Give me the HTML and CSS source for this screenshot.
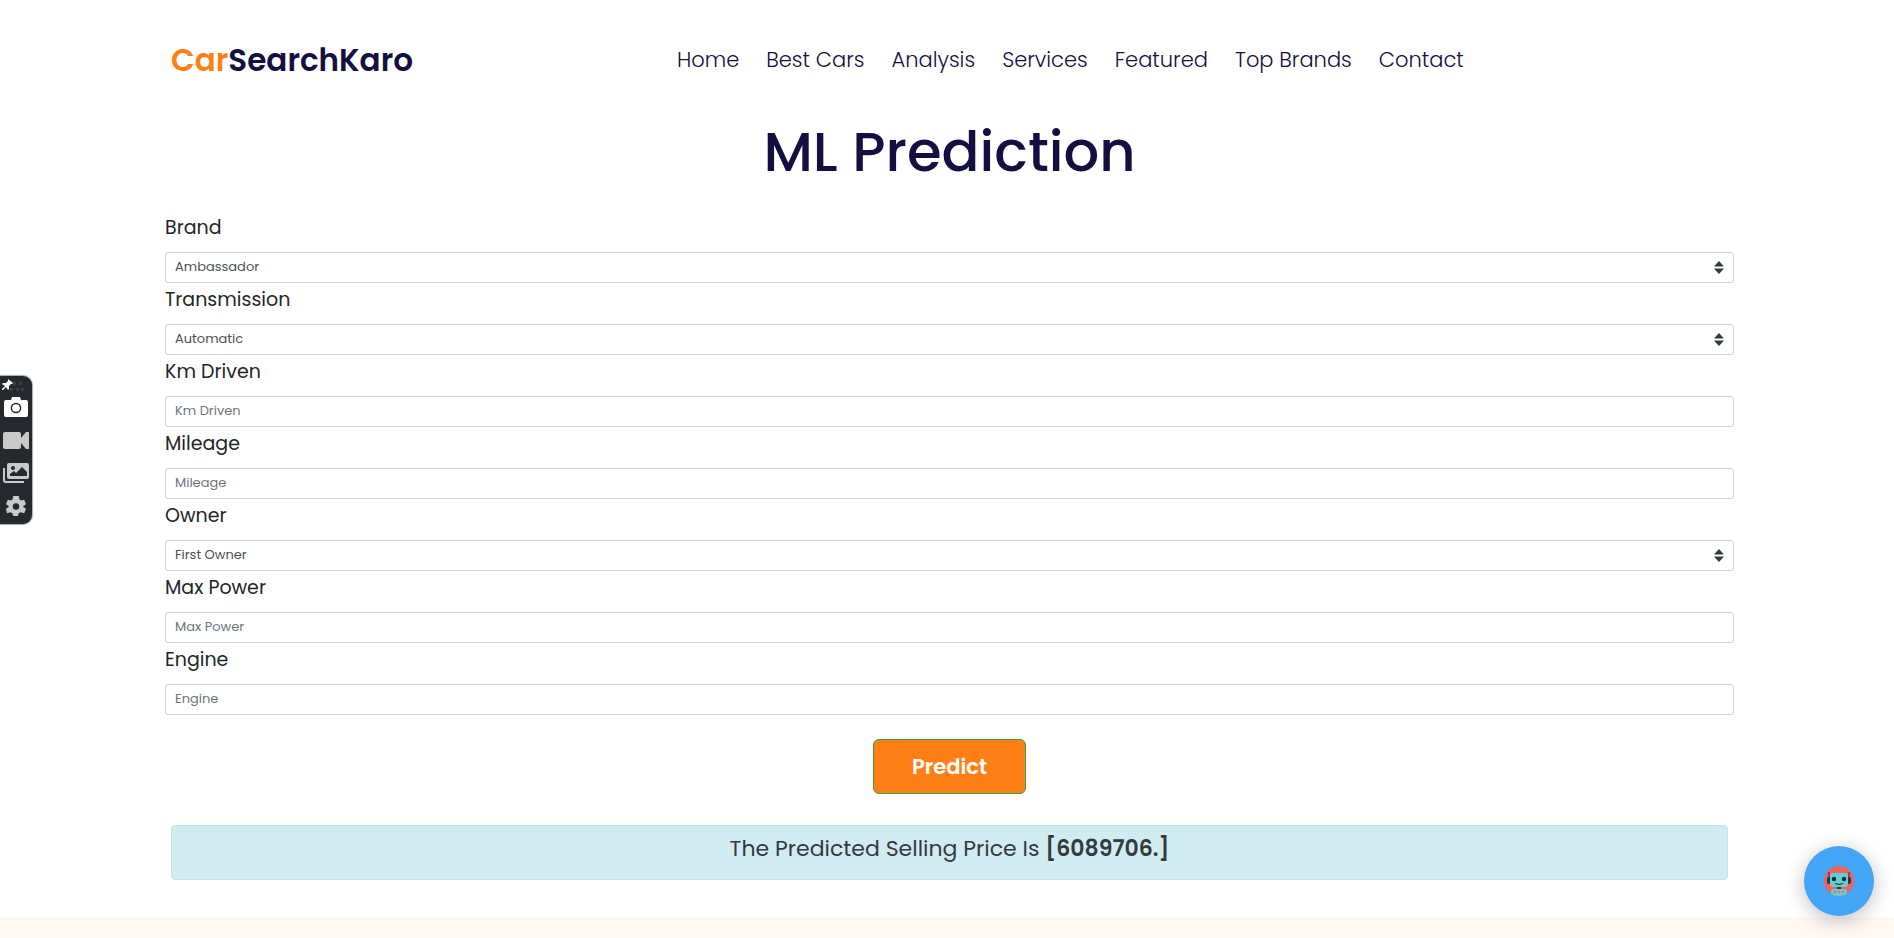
FILE: index.html
```html
<!DOCTYPE html>
<html lang="en">
<head>
<meta charset="utf-8">
<title>CarSearchKaro</title>
<link rel="stylesheet" href="styles.css">
</head>
<body>
<header class="header">
  <a class="brand" href="#"><span class="brand-accent">Car</span>SearchKaro</a>
  <nav class="nav">
    <a href="#">Home</a>
    <a href="#">Best Cars</a>
    <a href="#">Analysis</a>
    <a href="#">Services</a>
    <a href="#">Featured</a>
    <a href="#">Top Brands</a>
    <a href="#">Contact</a>
  </nav>
</header>
<main class="main">
  <h1 class="title">ML Prediction</h1>
  <form class="form">
    <label class="label" for="brand">Brand</label>
    <div class="select-wrap">
      <select class="control" id="brand"><option>Ambassador</option></select>
      <svg class="caret" viewBox="0 0 10 13"><path d="M5 0l5 5.500H0zM0 7.500h10L5 13z"/></svg>
    </div>
    <label class="label" for="transmission">Transmission</label>
    <div class="select-wrap">
      <select class="control" id="transmission"><option>Automatic</option></select>
      <svg class="caret" viewBox="0 0 10 13"><path d="M5 0l5 5.500H0zM0 7.500h10L5 13z"/></svg>
    </div>
    <label class="label" for="km">Km Driven</label>
    <input class="control" id="km" type="text" placeholder="Km Driven">
    <label class="label" for="mileage">Mileage</label>
    <input class="control" id="mileage" type="text" placeholder="Mileage">
    <label class="label" for="owner">Owner</label>
    <div class="select-wrap">
      <select class="control" id="owner"><option>First Owner</option></select>
      <svg class="caret" viewBox="0 0 10 13"><path d="M5 0l5 5.500H0zM0 7.500h10L5 13z"/></svg>
    </div>
    <label class="label" for="power">Max Power</label>
    <input class="control" id="power" type="text" placeholder="Max Power">
    <label class="label" for="engine">Engine</label>
    <input class="control" id="engine" type="text" placeholder="Engine">
    <button class="predict" type="button">Predict</button>
  </form>
  <div class="result" role="status">The Predicted Selling Price Is <strong>[6089706.]</strong></div>
</main>
<section class="band"></section>

<aside class="tools">
  <svg class="pin" viewBox="0 0 28 13">
    <g fill="#3b3e42"><path d="M12 3h3v3h-3zM18 3h3v3h-3zM9 9h3v3H9zM15 9h3v3h-3zM20 9h3v3h-3z"/></g>
    <path fill="#fff" d="M7 0l5 4-1 1-1 0-2 2 0 3-1 1-2-3-3 3-1 0 0-1 3-3-3-2 1-1 3 0 2-2z"/>
  </svg>
  <button class="tool" type="button" aria-label="Take photo">
    <svg viewBox="0 0 24 20"><path fill="#fff" d="M2 3h5l1-3h8l1 3h5q2 0 2 2v13q0 2-2 2H2q-2 0-2-2V5q0-2 2-2z"/><circle cx="12" cy="11" r="4.600" fill="none" stroke="#25282c" stroke-width="1.500"/></svg>
  </button>
  <button class="tool" type="button" aria-label="Record video">
    <svg viewBox="0 0 26 20"><path fill="#c9c9c9" d="M2 2h14q2 0 2 2v4l5-6h3v17h-3l-5-6v4q0 2-2 2H2q-2 0-2-2V4q0-2 2-2z"/></svg>
  </button>
  <button class="tool" type="button" aria-label="Gallery">
    <svg viewBox="0 0 26 20"><path fill="none" stroke="#c9c9c9" stroke-width="2" d="M1 5v12q0 2 2 2H21"/><rect x="4" y="0" width="22" height="16" rx="2" fill="#c9c9c9"/><circle cx="10" cy="5" r="2" fill="#25282c"/><path fill="#25282c" d="M7 13v-2l4-3 2 2 6-6 5 5v4z"/></svg>
  </button>
  <button class="tool" type="button" aria-label="Settings">
    <svg viewBox="0 0 22 22"><path fill="#c9c9c9" d="M8 0h6l1 4 2 1 3-1 2 5-3 2v1l3 2-2 5-4-1-2 1-1 3H8l-1-3-2-1-4 1-1-5 3-2v-1L0 9l2-5 3 1 2-1z"/><circle cx="11" cy="11.500" r="3.600" fill="#25282c"/></svg>
  </button>
</aside>

<button class="chat" type="button" aria-label="Open chat">
  <svg viewBox="0 0 30 32">
    <circle cx="15" cy="16" r="15" fill="#f0625d"/>
    <path d="M5 7v6M25 7v6" stroke="#273449" stroke-width="1"/>
    <rect x="3" y="12" width="4" height="7" rx="2" fill="#273449"/>
    <rect x="23" y="12" width="4" height="7" rx="2" fill="#273449"/>
    <path fill="#65cdd0" d="M9 8h12q3 0 3 3v8q0 3-3 3H9q-3 0-3-3v-8q0-3 3-3z"/>
    <circle cx="10" cy="14" r="2.200" fill="#152c3f"/><circle cx="20" cy="14" r="2.200" fill="#152c3f"/>
    <path d="M11 18.500q4 2 8 0" fill="none" stroke="#152c3f" stroke-width="1"/>
    <path d="M13 22h4v2h-4z" fill="#273449"/>
    <path d="M9 24h12q2 0 2 2v3q-8 4-16 0v-3q0-2 2-2z" fill="#65cdd0"/>
    <g fill="#e9706c"><circle cx="11" cy="27" r="1.200"/><circle cx="15" cy="27" r="1.200"/><circle cx="19" cy="27" r="1.200"/></g>
  </svg>
</button>
</body>
</html>
```
FILE: styles.css
```css
* { box-sizing: border-box; }
body {
  margin: 0;
  min-height: 100vh;
  display: flex;
  flex-direction: column;
  background: #fff;
  color: #212529;
  font-family: Poppins, Inter, "Open Sans", sans-serif;
}
a { text-decoration: none; color: #130f40; }
.header {
  display: flex;
  align-items: center;
  height: 119px;
  padding: 0 171px;
}
.brand {
  flex: 0 0 506px;
  padding-top: 2px;
  font-size: 31px;
  font-weight: 600;
}
.brand-accent { color: #ff7f17; }
.nav {
  display: flex;
  gap: 27px;
  font-size: 21px;
  font-weight: 300;
  white-space: nowrap;
}
.main { padding: 0 160px 37px 165px; }
.title {
  margin: 0 0 27px;
  font-size: 56px;
  line-height: 65px;
  font-weight: 500;
  text-align: center;
  color: #130f40;
}
.form { display: flex; flex-direction: column; }
.label {
  font-size: 19px;
  line-height: 34px;
  margin-bottom: 7px;
}
.control {
  display: block;
  width: 100%;
  height: 31px;
  padding: 0 9px 2px;
  border: 1px solid #ced4da;
  border-radius: 3px;
  background: #fff;
  color: #495057;
  font-family: inherit;
  font-size: 13px;
  font-weight: 400;
  appearance: none;
}
.control::placeholder { color: #6c757d; opacity: 1; }
.select-wrap { position: relative; }
.caret {
  position: absolute;
  right: 10px;
  top: 9px;
  width: 10px;
  height: 13px;
  fill: #343a40;
  pointer-events: none;
}
.predict {
  align-self: center;
  width: 153px;
  height: 55px;
  margin: 24px 0 31px;
  border: 1px solid #28a745;
  border-radius: 6px;
  background: #ff7f17;
  color: #fff;
  font-family: inherit;
  font-size: 21px;
  font-weight: 600;
}
.result {
  margin: 0 6px;
  padding: 7px 0 15px;
  border: 1px solid #bee5eb;
  border-radius: 4px;
  background: #d1ecf1;
  color: #343a40;
  font-size: 22px;
  line-height: 31px;
  text-align: center;
}
.result strong { font-weight: 600; }
.band { flex: 1; background: #fdf8f4; }
.tools {
  position: fixed;
  left: 0;
  top: 376px;
  width: 32px;
  padding: 3px 0 7px 3px;
  border-radius: 0 9px 9px 0;
  background: #25282c;
  box-shadow: 0 0 1px 1px #a8a9ab;
  display: flex;
  flex-direction: column;
}
.pin { width: 28px; height: 13px; margin: 0 0 4px -2px; }
.tool {
  width: 26px;
  height: 22px;
  margin-bottom: 11px;
  padding: 0;
  border: 0;
  background: none;
}
.tool:last-child { margin-bottom: 0; }
.tool svg { display: block; width: 26px; height: 20px; margin: auto; }
.chat {
  position: fixed;
  right: 20px;
  bottom: 22px;
  width: 70px;
  height: 70px;
  padding: 0;
  border: 0;
  border-radius: 50%;
  background: #42a5f5;
  box-shadow: 0 4px 20px rgba(0, 0, 0, .25);
}
.chat svg { display: block; width: 30px; height: 32px; margin: auto; }
```
